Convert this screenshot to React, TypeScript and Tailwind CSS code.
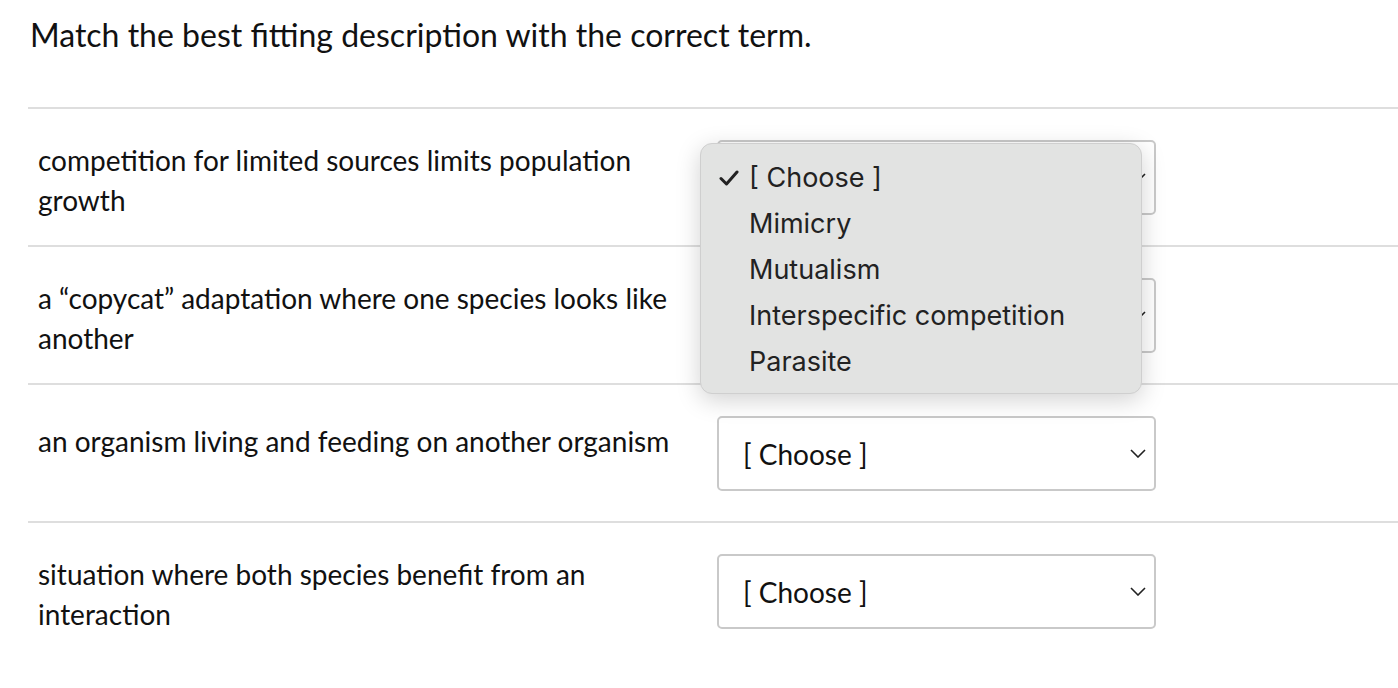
import React from "react";

const rows = [
  { text: "competition for limited sources limits population growth", extra: "pt-[31px]" },
  { text: "a “copycat” adaptation where one species looks like another", extra: "pt-[31px]" },
  { text: "an organism living and feeding on another organism", extra: "pt-[36px]" },
  { text: "situation where both species benefit from an interaction", extra: "pt-[31px]" },
];

function Chevron() {
  return (
    <svg width="16" height="9" viewBox="0 0 16 9" fill="none">
      <path d="M1 1l7 7 7-7" stroke="#222" strokeWidth="1.6" />
    </svg>
  );
}

export default function App() {
  return (
    <div className="relative w-[1398px] h-[688px] bg-white overflow-hidden text-[#111]" style={{ fontFamily: "Lato, 'Noto Sans', sans-serif" }}>
      <div className="pl-[30px] pt-[15px] h-[107px]">
        <h1 className="text-[32px] leading-[40px] font-normal">Match the best fitting description with the correct term.</h1>
      </div>
      <div className="ml-[28px]">
        {rows.map((r, i) => (
          <div key={i} className="flex h-[138px] border-t-2 border-[#dedede]">
            <div className="w-[689px] pl-[10px] pr-[30px]">
              <div className={`text-[28px] leading-[40px] ${r.extra}`}>{r.text}</div>
            </div>
            <div className="pt-[31px]">
              <div className="w-[439px] h-[75px] border-2 border-[#c9c9c9] rounded-[5px] flex items-center justify-between pl-[24px] pr-[8px]">
                <span className="text-[28px]">[ Choose ]</span>
                <Chevron />
              </div>
            </div>
          </div>
        ))}
      </div>
      <div
        className="absolute left-[700px] top-[143px] w-[442px] h-[251px] rounded-[12px] bg-[#e2e3e2] border border-[#cfcfcf] shadow-[0_6px_24px_rgba(0,0,0,0.18)] pt-[11px] text-[#222]"
        style={{ fontFamily: "Inter, 'Noto Sans', sans-serif" }}
      >
        {["[ Choose ]", "Mimicry", "Mutualism", "Interspecific competition", "Parasite"].map((o, i) => (
          <div key={o} className="flex items-center h-[46px] text-[27px]">
            <div className="w-[48px] flex justify-end pr-[10px]">
              {i === 0 && (
                <svg width="20" height="16" viewBox="0 0 20 16" fill="none">
                  <path d="M2 8.5l5.5 5.5L18 2" stroke="#222" strokeWidth="3" strokeLinecap="round" strokeLinejoin="round" />
                </svg>
              )}
            </div>
            <span>{o}</span>
          </div>
        ))}
      </div>
    </div>
  );
}
